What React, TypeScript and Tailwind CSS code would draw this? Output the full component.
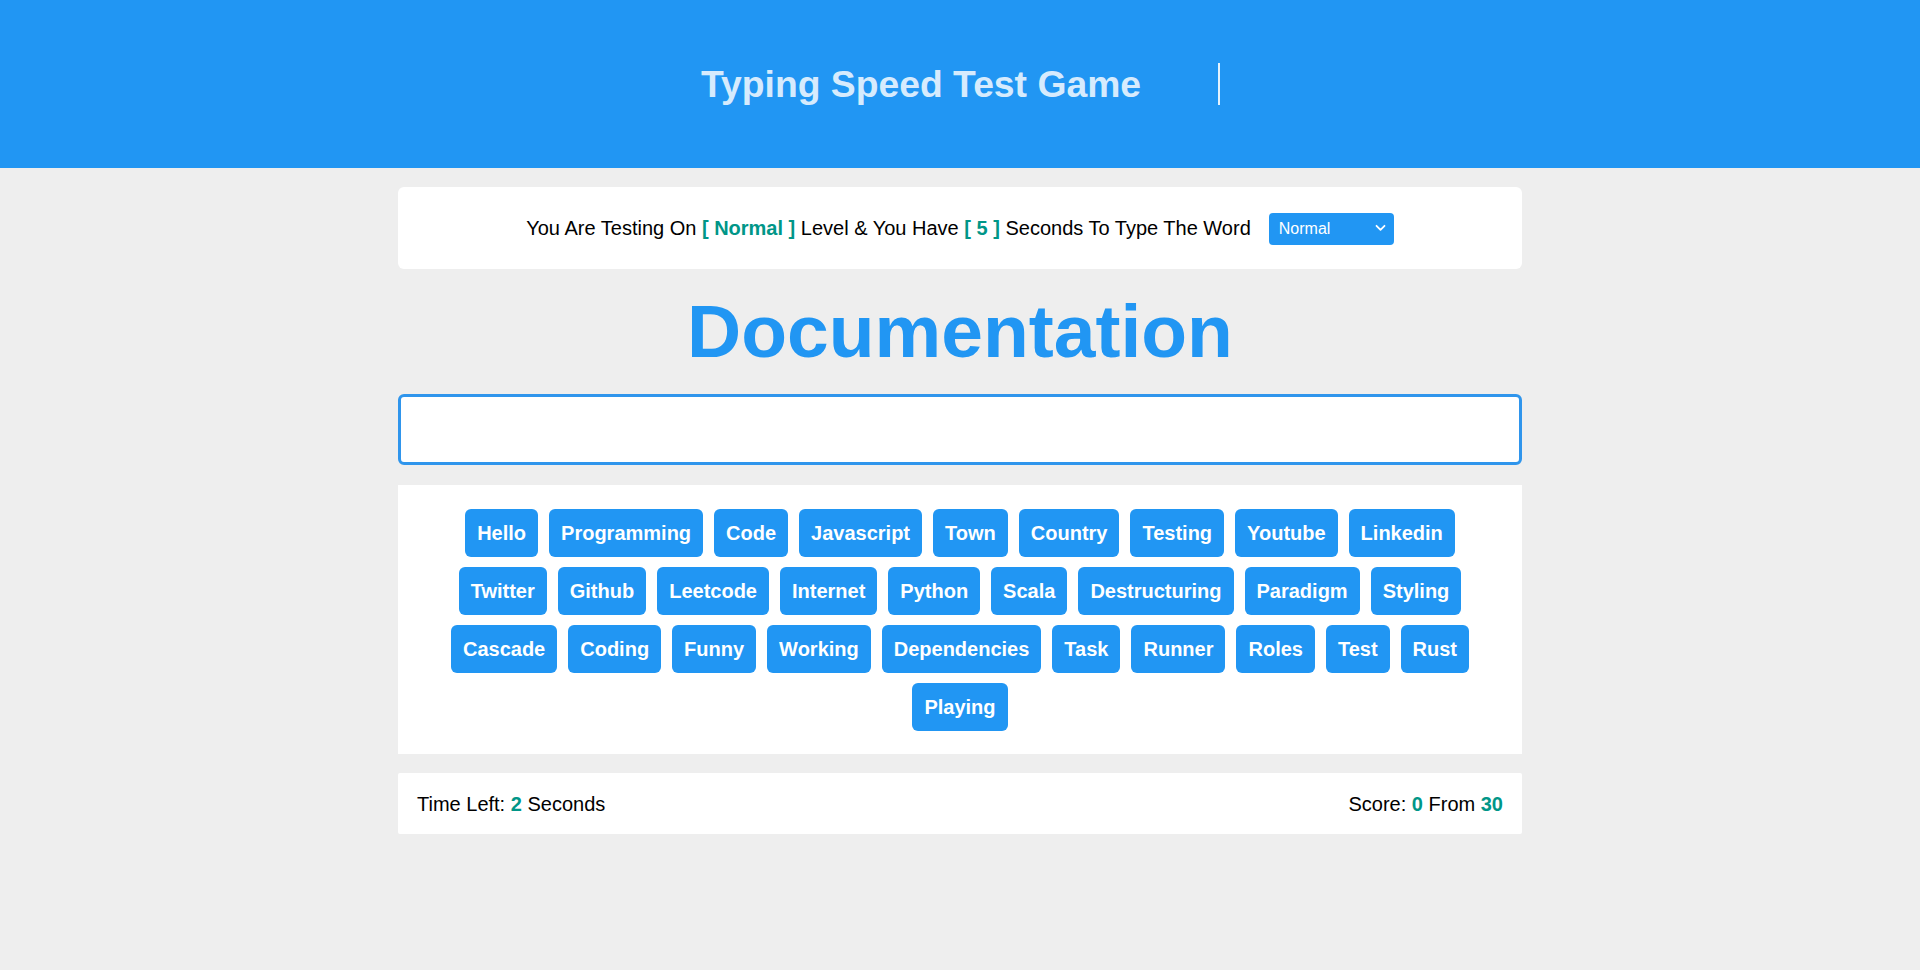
import React from "react";

const words = [
  "Hello","Programming","Code","Javascript","Town","Country","Testing","Youtube","Linkedin",
  "Twitter","Github","Leetcode","Internet","Python","Scala","Destructuring","Paradigm","Styling",
  "Cascade","Coding","Funny","Working","Dependencies","Task","Runner","Roles","Test","Rust","Playing",
];

export default function App() {
  return (
    <div className="min-h-screen bg-[#eeeeee] font-['Liberation_Sans',Arial,sans-serif] text-black">
      <header className="h-[168px] bg-[#2196f3] flex items-center justify-center">
        <div className="w-[520px] h-[42px] border-r-2 border-[#e3f2fd] flex items-center">
          <h1 className="text-[37.3px] leading-[42px] font-bold text-[#d6ebfd] whitespace-nowrap pl-px">
            Typing Speed Test Game
          </h1>
        </div>
      </header>

      <main className="w-[1124px] mx-auto pt-[19px]">
        <div className="h-[82px] bg-white rounded-[6px] flex items-center justify-center text-[20px]">
          <span>
            You Are Testing On <span className="font-bold text-[#009688]">[ Normal ]</span> Level &amp; You Have{" "}
            <span className="font-bold text-[#009688]">[ 5 ]</span> Seconds To Type The Word
          </span>
          <div className="relative ml-[18px] w-[125px] h-[32px]">
            <select
              defaultValue="Normal"
              className="appearance-none w-full h-full bg-[#2196f3] text-white text-[16px] rounded-[4px] pl-[10px] outline-none border-0 font-['Liberation_Sans',Arial,sans-serif]"
            >
              <option>Easy</option>
              <option>Normal</option>
              <option>Hard</option>
            </select>
            <svg
              className="absolute right-[8px] top-[12px] pointer-events-none"
              width="11"
              height="8"
              viewBox="0 0 11 8"
              fill="none"
            >
              <path d="M1.5 1.8 L5.5 5.8 L9.5 1.8" stroke="white" strokeWidth="1.8" strokeLinecap="round" strokeLinejoin="round" />
            </svg>
          </div>
        </div>

        <div className="h-[125px] flex items-center justify-center">
          <div className="text-[75px] leading-[125px] font-bold text-[#2196f3]">Documentation</div>
        </div>

        <input
          type="text"
          className="block w-full h-[71px] bg-white border-[3px] border-[#2f95ec] rounded-[6px] outline-none px-4 text-[24px]"
        />

        <div className="mt-[20px] bg-white px-[20px] pt-[24px] pb-[23px] flex flex-wrap justify-center gap-x-[11px] gap-y-[10px]">
          {words.map((w) => (
            <span
              key={w}
              className="h-[48px] px-[12px] flex items-center bg-[#2196f3] text-white text-[20px] font-bold rounded-[6px]"
            >
              {w}
            </span>
          ))}
        </div>

        <div className="mt-[19px] h-[61px] bg-white rounded-[2px] px-[19px] flex items-center justify-between text-[20px]">
          <span>
            Time Left: <span className="font-bold text-[#009688]">2</span> Seconds
          </span>
          <span>
            Score: <span className="font-bold text-[#009688]">0</span> From{" "}
            <span className="font-bold text-[#009688]">30</span>
          </span>
        </div>
      </main>
    </div>
  );
}
